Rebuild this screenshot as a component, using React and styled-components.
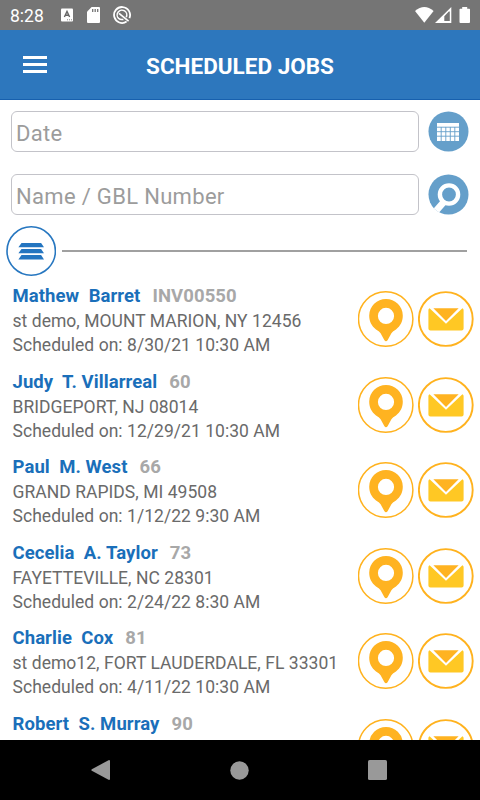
import styled, { createGlobalStyle } from "styled-components";

const GlobalStyle = createGlobalStyle`
  * {
    box-sizing: border-box;
  }

  body {
    margin: 0;
    background-color: #fff;
    font-family: Roboto, "Liberation Sans", sans-serif;
  }
`;

const Screen = styled.div`
  display: flex;
  flex-direction: column;
  width: 480px;
  height: 800px;
  overflow: hidden;
  background-color: #fff;
`;

const StatusBar = styled.div`
  display: flex;
  flex: none;
  align-items: center;
  height: 30px;
  padding: 0 10px;
  background-color: #757575;
  color: #fff;

  svg {
    display: block;
  }
`;

const Clock = styled.span`
  width: 51px;
  padding-top: 2px;
  font-size: 17.5px;
  line-height: 28px;
`;

const StatusGroup = styled.div`
  display: flex;
  align-items: center;
  gap: ${(props) => props.$gap || 0}px;
  margin-left: ${(props) => (props.$right ? "auto" : 0)};
`;

const Header = styled.header`
  display: grid;
  flex: none;
  grid-template-columns: 60px 1fr 60px;
  align-items: center;
  height: 70px;
  border-bottom: 1px solid #1760ae;
  background-color: #2d77bd;
  color: #fff;

  h1 {
    margin: 0;
    padding-top: 2px;
    font-size: 22.5px;
    font-weight: 700;
    line-height: 28px;
    text-align: center;
  }
`;

const MenuButton = styled.div`
  display: grid;
  gap: 4px;
  width: 24px;
  margin-left: 23px;

  span {
    height: 3px;
    background-color: #fff;
  }
`;

const Filters = styled.div`
  display: grid;
  flex: none;
  gap: 22px;
  padding: 11px 11px 0;
`;

const FilterRow = styled.div`
  display: flex;
  align-items: center;
  justify-content: space-between;
  height: 41px;

  svg {
    display: block;
  }
`;

const Field = styled.div`
  width: 408px;
  height: 41px;
  padding-left: 4px;
  border: 1px solid #c3c3c9;
  border-radius: 6px;
  color: #9c9c9c;
  font-size: 22px;
  letter-spacing: 0.32px;
  line-height: 43px;
`;

const Divider = styled.div`
  display: flex;
  flex: none;
  align-items: center;
  gap: 6px;
  height: 50px;
  margin-top: 11px;
  padding: 0 13px 0 6px;

  &::after {
    content: "";
    flex: 1;
    height: 2px;
    background-color: #a0a0a0;
  }
`;

const JobList = styled.main`
  flex: 1;
  min-height: 0;
  padding-top: 8px;
  overflow: hidden;
`;

const Job = styled.div`
  display: flex;
  justify-content: space-between;
  height: 85.6px;
  padding: 0 6.4px 0 12.5px;
  white-space: nowrap;
`;

const JobName = styled.div`
  margin-bottom: 1px;
  color: #1a6fba;
  font-size: 18.5px;
  font-weight: 700;
  letter-spacing: 0.08px;
  line-height: 24px;
  white-space: pre;

  span {
    margin-left: 12px;
    color: #a8a8a8;
  }
`;

const JobLine = styled.div`
  color: #6a6a6a;
  font-size: 17.5px;
  letter-spacing: 0.04px;
  line-height: 24px;
`;

const Actions = styled.div`
  display: flex;
  gap: 4px;
  padding-top: 7px;
`;

const NavBar = styled.nav`
  display: flex;
  flex: none;
  align-items: center;
  justify-content: space-between;
  height: 60px;
  padding: 0 93px 0 91px;
  background-color: #000;
`;

const jobs = [
  { name: "Mathew  Barret", number: "INV00550", address: "st demo, MOUNT MARION, NY 12456", date: "8/30/21 10:30 AM" },
  { name: "Judy  T. Villarreal", number: "60", address: "BRIDGEPORT, NJ 08014", date: "12/29/21 10:30 AM" },
  { name: "Paul  M. West", number: "66", address: "GRAND RAPIDS, MI 49508", date: "1/12/22 9:30 AM" },
  { name: "Cecelia  A. Taylor", number: "73", address: "FAYETTEVILLE, NC 28301", date: "2/24/22 8:30 AM" },
  { name: "Charlie  Cox", number: "81", address: "st demo12, FORT LAUDERDALE, FL 33301", date: "4/11/22 10:30 AM" },
  { name: "Robert  S. Murray", number: "90", address: "", date: "" },
];

function KeyboardIcon() {
  return (
    <svg width="12" height="14" viewBox="0 0 12 14">
      <rect y=".5" width="12" height="13" rx="1" fill="#fff" />
      <path d="M3.4 9 6 3.4 8.6 9M4.3 7.3h3.4" fill="none" stroke="#666" strokeWidth="1.4" />
      <path d="M6 11.8h1M8 11.8h1M10 11.8h1" stroke="#888" />
    </svg>
  );
}

function CardIcon() {
  return (
    <svg width="13" height="16" viewBox="0 0 13 16">
      <path d="M4.6 0H12a1 1 0 0 1 1 1v14a1 1 0 0 1-1 1H1a1 1 0 0 1-1-1V4.8z" fill="#fff" />
      <path d="M5.7 2v3M8.2 2v3M10.7 2v3" stroke="#757575" strokeWidth="1.3" />
    </svg>
  );
}

function CompassIcon() {
  return (
    <svg width="18" height="18" viewBox="0 0 18 18" fill="none" stroke="#fff">
      <path d="M13.6 15.6A8 8 0 1 1 16.4 12.2" strokeWidth="1.8" />
      <path d="M13.2 11.2A4.8 4.8 0 1 0 5.6 12.4Q7.4 14 10.4 13.4" strokeWidth="1.5" />
      <path d="M6 7.4 15.6 15.2" strokeWidth="1.7" />
    </svg>
  );
}

function CalendarIcon() {
  return (
    <svg width="41" height="41" viewBox="0 0 41 41">
      <circle cx="20.5" cy="20.5" r="20" fill="#659fca" />
      <path d="M9 12h22v18H9z" fill="#fff" />
      <path d="M9 16.2h22M9 20.7h22M9 25.2h22M13.2 16v14M17.8 16v14M22.3 16v14M26.8 16v14" stroke="#659fca" strokeWidth=".9" />
    </svg>
  );
}

function SearchIcon() {
  return (
    <svg width="41" height="41" viewBox="0 0 41 41">
      <defs>
        <clipPath id="disc">
          <circle cx="20.5" cy="20.5" r="20.2" />
        </clipPath>
      </defs>
      <circle cx="20.5" cy="20.5" r="20" fill="#659fca" />
      <g clipPath="url(#disc)" fill="none" stroke="#fff">
        <circle cx="21" cy="20.5" r="9.1" strokeWidth="4.4" />
        <path d="M16.2 27.5 7.5 37.5" strokeWidth="6.6" />
      </g>
    </svg>
  );
}

function StackIcon() {
  return (
    <svg width="50" height="50" viewBox="0 0 50 50">
      <circle cx="25.2" cy="25" r="24.2" fill="#fff" stroke="#2777c0" strokeWidth="1.6" />
      <path d="M15.5 17h19.6l2.9 4.3H12.4zM15.5 23h19.6l2.9 4.3H12.4zM15.5 29h19.6l2.9 4.4H12.4z" fill="#2475c0" />
    </svg>
  );
}

function PinIcon() {
  return (
    <svg width="56" height="56" viewBox="0 0 56 56">
      <circle cx="27.7" cy="28" r="27.2" fill="#fff" stroke="#ffb21e" strokeWidth="1.5" />
      <path
        fillRule="evenodd"
        fill="#ffb321"
        d="M28 8a16.8 16.8 0 0 1 16.8 16.6c0 6-2.4 10.6-6.8 13.8-2.3 1.6-3.4 1.8-4.6 3.9L29.7 49c-.9 1.6-2.5 1.6-3.4 0l-3.7-6.7c-1.2-2.1-2.3-2.3-4.6-3.9-4.4-3.2-6.8-7.8-6.8-13.8A16.8 16.8 0 0 1 28 8zm0 8.8a8.1 8.1 0 1 0 0 16.2 8.1 8.1 0 0 0 0-16.2z"
      />
    </svg>
  );
}

function MailIcon() {
  return (
    <svg width="56" height="56" viewBox="0 0 56 56">
      <circle cx="27.8" cy="28" r="26.9" fill="#fff" stroke="#ffb21e" strokeWidth="1.9" />
      <path d="M11.6 17.2 28 32.8l16.4-15.6q1.2.4 1.2 1.8v18.4q0 2-2 2H12.4q-2 0-2-2V19q0-1.4 1.2-1.8z" fill="#ffc824" />
      <path d="M15.4 17.2h25.2L28 30z" fill="#ffb321" />
    </svg>
  );
}

function App() {
  return (
    <>
      <GlobalStyle />
      <Screen>
        <StatusBar>
          <Clock>8:28</Clock>
          <StatusGroup $gap={13.5}>
            <KeyboardIcon />
            <CardIcon />
            <CompassIcon />
          </StatusGroup>
          <StatusGroup $right>
            <svg width="55" height="16" viewBox="0 0 55 16" fill="#fff">
              <path d="M0 4Q9.3-3.8 18.6 4L9.3 15.8z" />
              <path fillRule="evenodd" d="M20 16 36.3 0v16zM29.3 14h5.5V4.6h-1l-4.5 4.7z" />
              <path d="M47.2 0h5v1.7h2.1q.7 0 .7.8v12.6q0 .9-.9.9h-8.7q-.9 0-.9-.9V2.5q0-.8.7-.8h2z" />
            </svg>
          </StatusGroup>
        </StatusBar>

        <Header>
          <MenuButton>
            <span />
            <span />
            <span />
          </MenuButton>
          <h1>SCHEDULED JOBS</h1>
        </Header>

        <Filters>
          <FilterRow>
            <Field>Date</Field>
            <CalendarIcon />
          </FilterRow>
          <FilterRow>
            <Field>Name / GBL Number</Field>
            <SearchIcon />
          </FilterRow>
        </Filters>

        <Divider>
          <StackIcon />
        </Divider>

        <JobList>
          {jobs.map((job) => (
            <Job key={job.number}>
              <div>
                <JobName>
                  {job.name}
                  <span>{job.number}</span>
                </JobName>
                {job.address && <JobLine>{job.address}</JobLine>}
                {job.date && <JobLine>Scheduled on: {job.date}</JobLine>}
              </div>
              <Actions>
                <PinIcon />
                <MailIcon />
              </Actions>
            </Job>
          ))}
        </JobList>

        <NavBar>
          <svg width="19" height="20" viewBox="0 0 19 20">
            <path d="M18 0q1 0 1 1v18q0 1-1 1L.8 10.8q-1-.8 0-1.6z" fill="#999" />
          </svg>
          <svg width="20" height="19" viewBox="0 0 20 19">
            <circle cx="10.5" cy="9.5" r="9.2" fill="#999" />
          </svg>
          <svg width="19" height="20" viewBox="0 0 19 20">
            <rect width="19" height="20" rx="1.6" fill="#999" />
          </svg>
        </NavBar>
      </Screen>
    </>
  );
}

export default App;
